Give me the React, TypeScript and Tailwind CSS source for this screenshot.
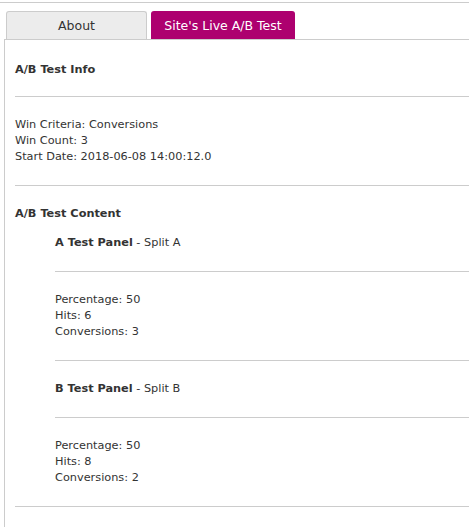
const line = "leading-[16px]";

function Hr({ className = "" }: { className?: string }) {
	return <div className={`h-px bg-[#cccccc] ${className}`} />;
}

function Stats({ pct, hits, conv }: { pct: number; hits: number; conv: number }) {
	return (
		<div className={`mt-[19px] pt-[1px] pb-[0px] ${line}`}>
			<div>Percentage: {pct}</div>
			<div>Hits: {hits}</div>
			<div>Conversions: {conv}</div>
		</div>
	);
}

export default function App() {
	return (
		<div className="w-[469px] h-[527px] overflow-hidden bg-white text-[#333333] font-['DejaVu_Sans',sans-serif] text-[11.3px]">
			{/* top rule */}
			<div className="h-[2px]" />
			<Hr />

			{/* tabs */}
			<div className="flex gap-[4px] pl-[6px] pt-[8px]">
				<div className="w-[141px] h-[28px] flex items-center justify-center rounded-t-[3px] border border-b-0 border-[#cccccc] bg-[#ececec] text-[12.5px] text-[#333333] pt-[1px]">
					About
				</div>
				<div className="w-[144px] h-[28px] flex items-center justify-center rounded-t-[3px] bg-[#ad006f] text-[12.5px] text-white pt-[2px]">
					Site's Live A/B Test
				</div>
			</div>

			{/* panel */}
			<div className="ml-[4px] w-[600px] h-[600px] border-l border-t border-[#cccccc] pl-[10px]">
				<div className={`mt-[21px] pt-[1px] font-bold ${line}`}>A/B Test Info</div>
				<Hr className="mt-[18px]" />
				<div className={`mt-[19px] pt-[1px] ${line}`}>
					<div>Win Criteria: Conversions</div>
					<div>Win Count: 3</div>
					<div>Start Date: 2018-06-08 14:00:12.0</div>
				</div>
				<Hr className="mt-[20px]" />

				<div className={`mt-[19px] pt-[1px] font-bold ${line}`}>A/B Test Content</div>
				<div className="pl-[40px]">
					<div className={`mt-[12px] pt-[1px] ${line}`}>
						<span className="font-bold">A Test Panel</span> - Split A
					</div>
					<Hr className="mt-[20px]" />
					<Stats pct={50} hits={6} conv={3} />
					<Hr className="mt-[20px]" />

					<div className={`mt-[19px] pt-[1px] ${line}`}>
						<span className="font-bold">B Test Panel</span> - Split B
					</div>
					<Hr className="mt-[20px]" />
					<Stats pct={50} hits={8} conv={2} />
				</div>
				<Hr className="mt-[20px]" />
			</div>
		</div>
	);
}
